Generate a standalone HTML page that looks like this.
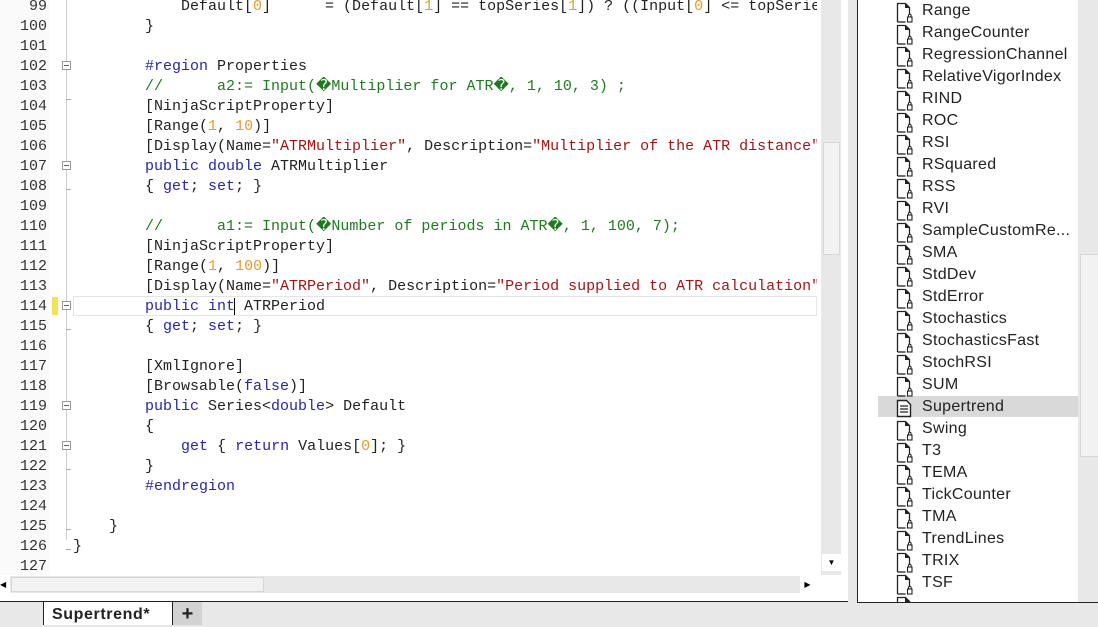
<!DOCTYPE html>
<html><head><meta charset="utf-8"><style>
*{margin:0;padding:0;box-sizing:border-box}
body{width:1098px;height:625px;overflow:hidden;background:#e8e8e8;position:relative;font-family:"Liberation Sans",sans-serif}
#ed{position:absolute;left:0;top:0;width:848px;height:602px;background:#fff;border-bottom:1.5px solid #222;overflow:hidden}
#gut{position:absolute;left:0;top:0;width:50px;height:575px;background:#fafafa}
.ln{position:absolute;left:0;width:47px;text-align:right;font:15px/20px "Liberation Mono",monospace;color:#333}
.cl{position:absolute;left:73px;white-space:pre;font:15px/20px "Liberation Mono",monospace;color:#222;width:744px;overflow:hidden}
.k{color:#2626a8}.s{color:#a31515}.n{color:#e69a2e}.c{color:#1f7a1f}
.fold{position:absolute;left:62px;width:9px;height:9px;border:1px solid #999;background:#fff}
.fold:after{content:"";position:absolute;left:1px;top:3px;width:5px;height:1px;background:#666}
.vl{position:absolute;left:66px;width:1px;background:#ccc}
.tick{position:absolute;left:66px;width:5px;height:1px;background:#aaa}
#vs{position:absolute;left:821px;top:0;width:20px;height:575px;background:#e8e8e8}
#hs{position:absolute;left:0;top:576px;width:815px;height:17px;background:#e8e8e8}
#rp{position:absolute;left:857px;top:-2px;width:241px;height:605px;background:#fff;border-left:1.5px solid #222;border-bottom:1.5px solid #222;overflow:hidden}
.it{position:absolute;left:64px;font-size:16px;letter-spacing:0.3px;line-height:22px;color:#222;white-space:nowrap}
.ic{position:absolute;left:38px}
</style></head><body>
<div id="ed">
<div id="gut"></div>
<div style="position:absolute;left:73px;top:296px;width:744px;height:20px;border:1px solid #e4e4e4"></div>
<div style="position:absolute;left:52px;top:297px;width:6px;height:18px;background:#f3e255"></div>
<div class="vl" style="top:0;height:100px"></div><div class="tick" style="top:99px"></div>
<div class="vl" style="top:100px;height:440px"></div>
<div class="tick" style="top:189px"></div><div class="tick" style="top:329px"></div><div class="tick" style="top:469px"></div><div class="tick" style="top:529px"></div><div class="tick" style="top:549px"></div>
<div class="fold" style="top:61px"></div><div class="fold" style="top:161px"></div><div class="fold" style="top:301px"></div><div class="fold" style="top:401px"></div><div class="fold" style="top:441px"></div>
<div class="ln" style="top:-3px">99</div><div class="cl" style="top:-3px">            Default[<span class="n">0</span>]      = (Default[<span class="n">1</span>] == topSeries[<span class="n">1</span>]) ? ((Input[<span class="n">0</span>] &lt;= topSeries</div>
<div class="ln" style="top:17px">100</div><div class="cl" style="top:17px">        }</div>
<div class="ln" style="top:37px">101</div>
<div class="ln" style="top:57px">102</div><div class="cl" style="top:57px">        <span class="k">#region</span> Properties</div>
<div class="ln" style="top:77px">103</div><div class="cl c" style="top:77px">        //      a2:= Input(�Multiplier for ATR�, 1, 10, 3) ;</div>
<div class="ln" style="top:97px">104</div><div class="cl" style="top:97px">        [NinjaScriptProperty]</div>
<div class="ln" style="top:117px">105</div><div class="cl" style="top:117px">        [Range(<span class="n">1</span>, <span class="n">10</span>)]</div>
<div class="ln" style="top:137px">106</div><div class="cl" style="top:137px">        [Display(Name=<span class="s">"ATRMultiplier"</span>, Description=<span class="s">"Multiplier of the ATR distance"</span></div>
<div class="ln" style="top:157px">107</div><div class="cl" style="top:157px">        <span class="k">public double</span> ATRMultiplier</div>
<div class="ln" style="top:177px">108</div><div class="cl" style="top:177px">        { <span class="k">get</span>; <span class="k">set</span>; }</div>
<div class="ln" style="top:197px">109</div>
<div class="ln" style="top:217px">110</div><div class="cl c" style="top:217px">        //      a1:= Input(�Number of periods in ATR�, 1, 100, 7);</div>
<div class="ln" style="top:237px">111</div><div class="cl" style="top:237px">        [NinjaScriptProperty]</div>
<div class="ln" style="top:257px">112</div><div class="cl" style="top:257px">        [Range(<span class="n">1</span>, <span class="n">100</span>)]</div>
<div class="ln" style="top:277px">113</div><div class="cl" style="top:277px">        [Display(Name=<span class="s">"ATRPeriod"</span>, Description=<span class="s">"Period supplied to ATR calculation"</span></div>
<div class="ln" style="top:297px">114</div><div class="cl" style="top:297px">        <span class="k">public int</span><span style="border-left:1px solid #000;margin-left:-1px"></span> ATRPeriod</div>
<div class="ln" style="top:317px">115</div><div class="cl" style="top:317px">        { <span class="k">get</span>; <span class="k">set</span>; }</div>
<div class="ln" style="top:337px">116</div>
<div class="ln" style="top:357px">117</div><div class="cl" style="top:357px">        [XmlIgnore]</div>
<div class="ln" style="top:377px">118</div><div class="cl" style="top:377px">        [Browsable(<span class="k">false</span>)]</div>
<div class="ln" style="top:397px">119</div><div class="cl" style="top:397px">        <span class="k">public</span> Series&lt;<span class="k">double</span>&gt; Default</div>
<div class="ln" style="top:417px">120</div><div class="cl" style="top:417px">        {</div>
<div class="ln" style="top:437px">121</div><div class="cl" style="top:437px">            <span class="k">get</span> { <span class="k">return</span> Values[<span class="n">0</span>]; }</div>
<div class="ln" style="top:457px">122</div><div class="cl" style="top:457px">        }</div>
<div class="ln" style="top:477px">123</div><div class="cl" style="top:477px">        <span class="k">#endregion</span></div>
<div class="ln" style="top:497px">124</div>
<div class="ln" style="top:517px">125</div><div class="cl" style="top:517px">    }</div>
<div class="ln" style="top:537px">126</div><div class="cl" style="top:537px">}</div>
<div class="ln" style="top:557px">127</div>
<div style="position:absolute;left:0;top:575px;width:848px;height:27px;background:#fff"></div>
<div id="vs"><div style="position:absolute;left:2px;top:142px;width:17px;height:113px;background:#f2f2f2;border:1px solid #d6d6d6"></div>
<div style="position:absolute;left:1px;top:554px;width:19px;height:17px;background:#fff;font-size:8px;text-align:center;line-height:17px">▼</div></div>
<div id="hs"><div style="position:absolute;left:0;top:0;width:10px;height:17px;background:#fff;font-size:8px;line-height:17px">◀</div>
<div style="position:absolute;left:11px;top:1px;width:253px;height:15px;background:#f2f2f2;border:1px solid #d6d6d6"></div>
<div style="position:absolute;left:800px;top:0;width:15px;height:17px;background:#fff;font-size:8px;line-height:17px;text-align:center">▶</div></div>
</div>
<div id="rp">
<div style="position:absolute;left:20px;top:398px;width:200px;height:21px;background:#d9d9d9"></div>
<div style="position:absolute;left:220px;top:0;width:21px;height:605px;background:#e8e8e8"><div style="position:absolute;left:2px;top:256px;width:19px;height:203px;background:#f2f2f2;border:1px solid #d6d6d6"></div></div>
<div id="items"></div>
</div>
<div style="position:absolute;left:43px;top:602px;width:130px;height:23px;background:#fff;border-left:1.5px solid #222;border-right:1.5px solid #222;font-weight:bold;font-size:16px;letter-spacing:0.6px;line-height:25px;padding-left:8px;color:#222">Supertrend*</div>
<div style="position:absolute;left:173px;top:602px;width:29px;height:23px;background:#d2d2d2;font-weight:bold;font-size:20px;line-height:24px;text-align:center;color:#222">+</div>
<script>
var n=["Range","RangeCounter","RegressionChannel","RelativeVigorIndex","RIND","ROC","RSI","RSquared","RSS","RVI","SampleCustomRe...","SMA","StdDev","StdError","Stochastics","StochasticsFast","StochRSI","SUM","Supertrend","Swing","T3","TEMA","TickCounter","TMA","TrendLines","TRIX","TSF",""];
var h="";n.forEach(function(t,i){var y=2+i*22;
var ic=t=="Supertrend"?'<svg class="ic" style="top:'+(y+3)+'px" width="17" height="19"><path d="M1.5 1.5h9l4 4v12h-13z" fill="#fff" stroke="#222" stroke-width="1.4"/><path d="M4 7h8M4 10h8M4 13h8" stroke="#222" stroke-width="1.3"/></svg>':'<svg class="ic" style="top:'+(y+2)+'px" width="18" height="21"><path d="M1.5 20V1.5h8l4 4V13" fill="none" stroke="#222" stroke-width="1.3"/><path d="M9.5 1.5v4h4" fill="#222" stroke="#222" stroke-width="1"/><path d="M1.5 20h8" stroke="#222" stroke-width="1.3"/><rect x="11.5" y="15" width="4.5" height="5" fill="none" stroke="#222" stroke-width="1.1"/><path d="M12.5 15v-1.5a1.3 1.3 0 0 1 2.6 0V15" fill="none" stroke="#222"/></svg>';
h+=ic+'<div class="it" style="top:'+y+'px">'+t+'</div>';});
document.getElementById("items").innerHTML=h;
</script>
</body></html>
